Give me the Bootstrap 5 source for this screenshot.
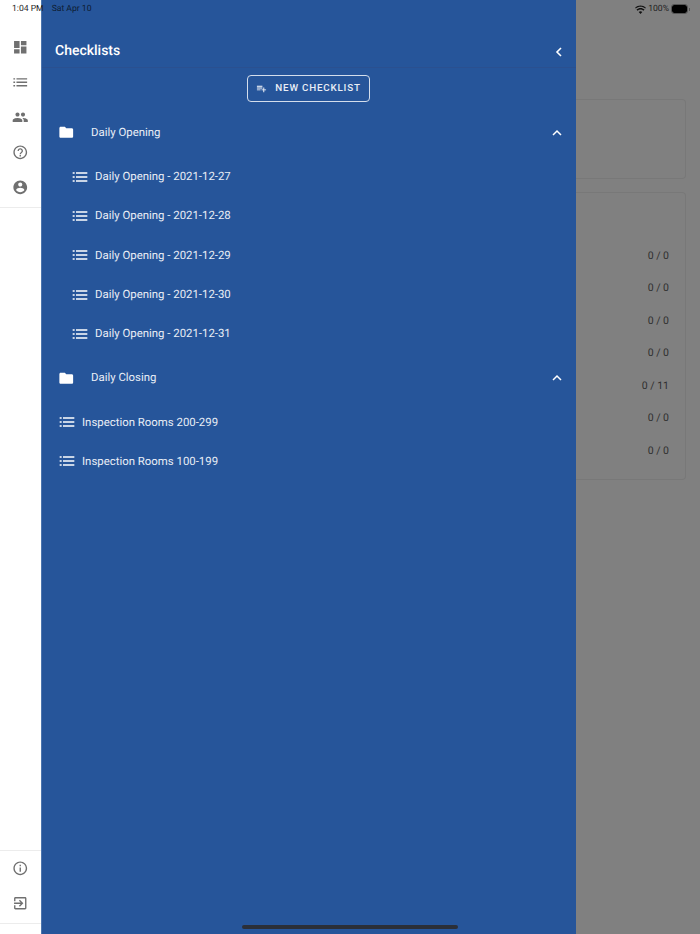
<!DOCTYPE html>
<html lang="en">
  <head>
    <meta charset="UTF-8" />
    <meta name="viewport" content="width=device-width, initial-scale=1.0" />
    <title>Checklists</title>
    <link
      href="https://cdn.jsdelivr.net/npm/bootstrap@5.3.0/dist/css/bootstrap.min.css"
      rel="stylesheet"
    />
    <style>
      html, body { height: 100%; }
      body { font-family: Roboto, "Liberation Sans", sans-serif; background-color: #fff; overflow: hidden; text-rendering: geometricPrecision; }
      .app-shell { height: 934px; position: relative; }
      /* left icon rail */
      .icon-rail { width: 41px; flex: none; background-color: #fff; }
      .rail-group { padding-top: 30px; padding-bottom: 2px; border-bottom: 1px solid #ececec; }
      .rail-bottom { border-top: 1px solid #ececec; border-bottom: 1px solid #ececec; margin-bottom: 10px; padding-bottom: 2px; }
      .rail-btn { height: 35px; color: #707070; }
      .rail-btn svg { width: 16.5px; height: 16.5px; fill: currentColor; }
      /* blue drawer */
      .side-drawer { width: 535px; flex: none; background-color: #26559a; color: #fff; border-left: 1px solid #4c75ae; }
      .drawer-head { height: 68px; padding: 36px 11px 0 13px; border-bottom: 1px solid #2a5090; }
      .drawer-title { font-size: 14px; font-weight: 500; }
      .new-btn { height: 27px; width: 123px; border: 1px solid #d4deec; border-radius: 4px; color: #e9eef6; font-size: 9.8px; font-weight: 500; letter-spacing: .8px; padding: 0; margin-top: 7px; margin-left: -1px; background: transparent; }
      .new-btn:hover { color: #fff; border-color: #d4deec; }
      .new-btn svg { width: 11px; height: 11px; fill: #fff; }
      .row-label { font-size: 11.4px; color: #e9eef6; }
      .folder-row { height: 39px; padding-left: 15.5px; padding-right: 13px; margin-top: 5px; }
      .folder-row.first-folder { margin-top: 11px; }
      .folder-row svg.folder-ico { width: 16.5px; height: 16.5px; fill: #fff; margin-right: 17px; }
      .folder-row svg.chev { width: 12px; height: 12px; fill: none; stroke: #fff; stroke-width: 1.5; }
      .list-row { height: 39.3px; }
      .list-row.nested { padding-left: 30px; }
      .list-row.top { padding-left: 17px; }
      .list-row svg { width: 16px; height: 16px; fill: #fff; margin-right: 7px; }
      .after-folder { margin-top: 5px; }
      /* dimmed page behind the drawer */
      .page-scrim { background-color: #808080; color: #2f2f2f; }
      .bg-box { border: 1px solid #787878; border-left: 0; border-radius: 0 4px 4px 0; margin-right: 14px; }
      .bg-box.first-box { height: 80px; margin-top: 99px; }
      .bg-box.second-box { margin-top: 13px; height: 288px; padding-top: 46.5px; }
      .count-row { height: 32.5px; font-size: 10.5px; padding-right: 16px; }
      /* overlays */
      .status-bar { position: absolute; top: 0; left: 0; right: 0; height: 19px; font-size: 8.6px; color: #1e1e1e; padding: 0 10px 0 12px; }
      .status-date { margin-left: 8px; color: #0d1b30; }
      .status-right svg { display: block; }
      .wifi-ico { margin-right: 2px; }
      .battery-box { width: 15px; height: 8px; background: #000; border-radius: 2px; margin-left: 3px; outline: 1px solid #555; }
      .battery-tip { width: 1px; height: 3px; background: #555; margin-left: 2px; }
      .home-pill { position: absolute; left: 242px; bottom: 5px; width: 216px; height: 4px; border-radius: 2px; background-color: #2b2f38; }
    </style>
  </head>
  <body>
    <div class="app-shell d-flex">
      <!-- Icon rail -->
      <div class="icon-rail d-flex flex-column justify-content-between">
        <div class="rail-group">
          <div class="rail-btn d-flex align-items-center justify-content-center">
            <svg viewBox="0 0 24 24"><path d="M3 13h8V3H3zm0 8h8v-6H3zm10 0h8V11h-8zm0-18v6h8V3z"/></svg>
          </div>
          <div class="rail-btn d-flex align-items-center justify-content-center">
            <svg viewBox="0 0 24 24"><path d="M2 13h2.5v-2H2zm0 5h2.5v-2H2zm0-10h2.5V6H2zm4.500 5H22v-2H6.500zm0 5H22v-2H6.500zm0-12v2H22V6z"/></svg>
          </div>
          <div class="rail-btn d-flex align-items-center justify-content-center">
            <svg viewBox="0 0 24 24"><path d="M16 11c1.660 0 3-1.340 3-3s-1.340-3-3-3-3 1.340-3 3 1.340 3 3 3zm-8 0c1.660 0 3-1.340 3-3S9.660 5 8 5 5 6.340 5 8s1.340 3 3 3zm0 2c-2.330 0-7 1.170-7 3.500V19h14v-2.500C15 14.170 10.330 13 8 13zm8 0c-.29 0-.62.02-.97.05 1.160.84 1.970 1.970 1.970 3.450V19h6v-2.500c0-2.330-4.670-3.500-7-3.500z"/></svg>
          </div>
          <div class="rail-btn d-flex align-items-center justify-content-center">
            <svg viewBox="0 0 24 24"><path d="M11 18h2v-2h-2zm1-16C6.480 2 2 6.480 2 12s4.480 10 10 10 10-4.480 10-10S17.520 2 12 2zm0 18c-4.410 0-8-3.590-8-8s3.590-8 8-8 8 3.590 8 8-3.590 8-8 8zm0-14c-2.210 0-4 1.790-4 4h2c0-1.100.9-2 2-2s2 .9 2 2c0 2-3 1.750-3 5h2c0-2.250 3-2.500 3-5 0-2.210-1.790-4-4-4z"/></svg>
          </div>
          <div class="rail-btn d-flex align-items-center justify-content-center">
            <svg viewBox="0 0 24 24"><path d="M12 2C6.480 2 2 6.480 2 12s4.480 10 10 10 10-4.480 10-10S17.520 2 12 2zm0 3c1.660 0 3 1.340 3 3s-1.340 3-3 3-3-1.340-3-3 1.340-3 3-3zm0 14.200c-2.500 0-4.710-1.280-6-3.220.03-1.990 4-3.080 6-3.080s5.970 1.090 6 3.080c-1.290 1.940-3.500 3.220-6 3.220z"/></svg>
          </div>
        </div>
        <div class="rail-bottom">
          <div class="rail-btn d-flex align-items-center justify-content-center">
            <svg viewBox="0 0 24 24"><path d="M11 7h2v2h-2zm0 4h2v6h-2zm1-9C6.480 2 2 6.480 2 12s4.480 10 10 10 10-4.480 10-10S17.520 2 12 2zm0 18c-4.410 0-8-3.590-8-8s3.590-8 8-8 8 3.590 8 8-3.590 8-8 8z"/></svg>
          </div>
          <div class="rail-btn d-flex align-items-center justify-content-center">
            <svg viewBox="0 0 24 24"><path d="M10.090 15.590 11.500 17l5-5-5-5-1.410 1.410L12.670 11H3v2h9.670zM19 3H5c-1.110 0-2 .9-2 2v4h2V5h14v14H5v-4H3v4c0 1.100.89 2 2 2h14c1.100 0 2-.9 2-2V5c0-1.100-.9-2-2-2z"/></svg>
          </div>
        </div>
      </div>

      <!-- Drawer -->
      <div class="side-drawer d-flex flex-column">
        <div class="drawer-head d-flex align-items-center justify-content-between">
          <span class="drawer-title">Checklists</span>
          <svg width="12" height="12" viewBox="0 0 12 12" fill="none" stroke="#fff" stroke-width="1.600"><path d="M8 2 4 6l4 4"/></svg>
        </div>
        <div class="d-flex justify-content-center">
          <button type="button" class="btn new-btn d-flex align-items-center justify-content-center gap-2">
            <svg viewBox="0 0 24 24"><path d="M14 10H2v2h12zm0-4H2v2h12zm4 8v-4h-2v4h-4v2h4v4h2v-4h4v-2zM2 16h8v-2H2z"/></svg>
            NEW CHECKLIST
          </button>
        </div>

        <div class="folder-row first-folder d-flex align-items-center">
          <svg class="folder-ico" viewBox="0 0 24 24"><path d="M10 4H4c-1.100 0-2 .9-2 2v12c0 1.100.9 2 2 2h16c1.100 0 2-.9 2-2V8c0-1.100-.9-2-2-2h-8z"/></svg>
          <span class="row-label flex-grow-1">Daily Opening</span>
          <svg class="chev" viewBox="0 0 12 12"><path d="M2 8l4-4 4 4"/></svg>
        </div>
        <div class="after-folder" id="opening-rows"></div>

        <div class="folder-row d-flex align-items-center">
          <svg class="folder-ico" viewBox="0 0 24 24"><path d="M10 4H4c-1.100 0-2 .9-2 2v12c0 1.100.9 2 2 2h16c1.100 0 2-.9 2-2V8c0-1.100-.9-2-2-2h-8z"/></svg>
          <span class="row-label flex-grow-1">Daily Closing</span>
          <svg class="chev" viewBox="0 0 12 12"><path d="M2 8l4-4 4 4"/></svg>
        </div>
        <div class="after-folder" id="inspection-rows"></div>
      </div>

      <!-- Dimmed page -->
      <div class="page-scrim flex-grow-1">
        <div class="bg-box first-box"></div>
        <div class="bg-box second-box" id="counts"></div>
      </div>

      <!-- Status bar -->
      <div class="status-bar d-flex align-items-center justify-content-between">
        <div><span>1:04 PM</span><span class="status-date">Sat Apr 10</span></div>
        <div class="status-right d-flex align-items-center">
          <svg width="11" height="9" viewBox="0 0 24 20" fill="#111" class="wifi-ico"><path d="M12 20l-4-4.500c2.300-2 5.700-2 8 0zM5.500 12.700 3 10c5-4.600 13-4.600 18 0l-2.500 2.700c-3.700-3.300-9.300-3.300-13 0zM1.500 8 0 6C6.800-.5 17.200-.5 24 6l-1.500 2C16.500 2.500 7.500 2.500 1.500 8z"/></svg>
          <span>100%</span>
          <div class="battery-box"></div>
          <div class="battery-tip"></div>
        </div>
      </div>
      <div class="home-pill"></div>
    </div>

    <script>
      const listIcon =
        '<svg viewBox="0 0 24 24"><path d="M1 13.300h3v-2.600H1zm0 6h3v-2.600H1zm0-12h3V4.700H1zm5 6h17v-2.600H6zm0 6h17v-2.600H6zM6 4.700v2.600h17V4.700z"/></svg>';

      const rowHtml = (name, cls) => `
        <div class="list-row ${cls} d-flex align-items-center">
          ${listIcon}<span class="row-label">${name}</span>
        </div>`;

      document.getElementById("opening-rows").innerHTML = ["27", "28", "29", "30", "31"]
        .map((d) => rowHtml("Daily Opening - 2021-12-" + d, "nested"))
        .join("");

      document.getElementById("inspection-rows").innerHTML = ["Inspection Rooms 200-299", "Inspection Rooms 100-199"]
        .map((n) => rowHtml(n, "top"))
        .join("");

      document.getElementById("counts").innerHTML = ["0 / 0", "0 / 0", "0 / 0", "0 / 0", "0 / 11", "0 / 0", "0 / 0"]
        .map((c) => `<div class="count-row d-flex align-items-center justify-content-end">${c}</div>`)
        .join("");
    </script>
    <script src="https://cdn.jsdelivr.net/npm/bootstrap@5.3.0/dist/js/bootstrap.bundle.min.js"></script>
  </body>
</html>
